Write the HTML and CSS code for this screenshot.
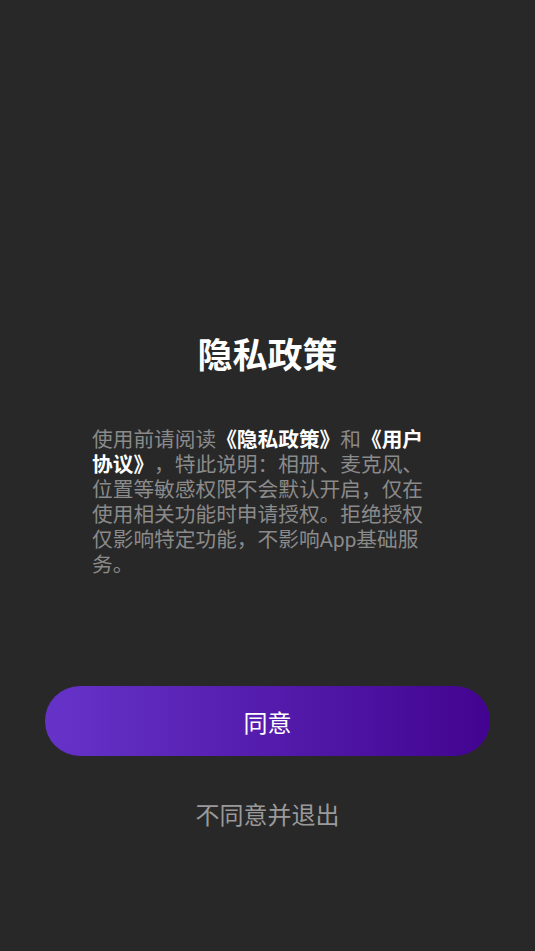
FILE: index.html
```html
<!DOCTYPE html>
<html lang="zh-CN">
<head>
<meta charset="utf-8">
<title>隐私政策</title>
<link rel="stylesheet" href="styles.css">
</head>
<body>
<main class="page">
  <h1 class="title">隐私政策</h1>
  <p class="desc">使用前请阅读<strong>《隐私政策》</strong>和<strong>《用户协议》</strong>，特此说明：相册、麦克风、位置等敏感权限不会默认开启，仅在使用相关功能时申请授权。拒绝授权仅影响特定功能，不影响App基础服务。</p>
  <button class="agree" type="button">同意</button>
  <button class="decline" type="button">不同意并退出</button>
</main>
</body>
</html>
```
FILE: styles.css
```css
html, body {
  margin: 0;
  padding: 0;
  background: #282828;
}
body {
  font-family: Roboto, "Noto Sans CJK SC", sans-serif;
  width: 535px;
  height: 951px;
  overflow: hidden;
  text-spacing-trim: space-all;
  font-feature-settings: "halt" 0, "chws" 0;
}
.page {
  display: flex;
  flex-direction: column;
  padding-top: 337px;
}
.title {
  margin: 0;
  font-size: 35px;
  line-height: 40px;
  font-weight: 700;
  color: #ffffff;
  text-align: center;
}
.desc {
  margin: 51px 92px 0 92px;
  font-size: 20.7px;
  line-height: 25px;
  color: #8a8a8a;
  text-spacing-trim: space-all;
}
.desc strong {
  color: #ffffff;
  font-weight: 700;
}
.agree {
  margin: 108px 45px 0 45px;
  height: 70px;
  border: none;
  border-radius: 35px;
  background: linear-gradient(90deg, #6633c9 0%, #420490 100%);
  color: #ffffff;
  font-family: inherit;
  font-size: 24px;
  padding: 0;
}
.decline {
  margin: 45px auto 0 auto;
  border: none;
  background: transparent;
  color: #9a9a9a;
  font-family: inherit;
  font-size: 24px;
  line-height: 30px;
  padding: 0;
}
```
